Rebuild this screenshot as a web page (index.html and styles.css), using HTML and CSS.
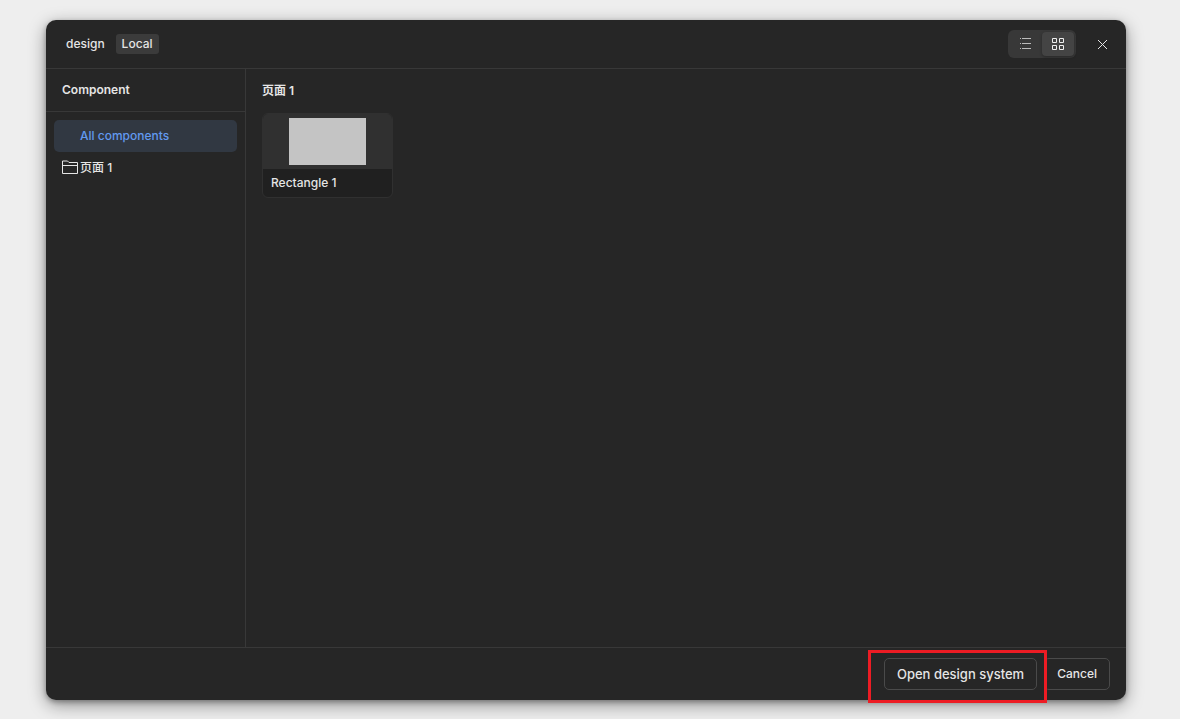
FILE: index.html
```html
<!DOCTYPE html>
<html lang="en">
<head>
    <meta charset="UTF-8">
    <meta name="viewport" content="width=device-width, initial-scale=1.0">
    <title>Design components</title>
    <link rel="stylesheet" href="styles.css">
</head>
<body>
    <main class="dialog" role="dialog" aria-label="design">
        <header class="dialog-header">
            <span class="title">design</span>
            <span class="tag">Local</span>
            <div class="view-switch">
                <button type="button" class="view-button" aria-label="List view">
                    <svg width="14" height="14" viewBox="0 0 14 14" fill="currentColor" shape-rendering="crispEdges">
                        <path d="M1 1h1v1H1zM3 1h9v1H3zM1 6h1v1H1zM3 6h9v1H3zM1 11h1v1H1zM3 11h9v1H3z"/>
                    </svg>
                </button>
                <button type="button" class="view-button active" aria-label="Grid view">
                    <svg width="14" height="14" viewBox="0 0 14 14" fill="none" stroke="currentColor">
                        <path d="M1.5 1.5h4v4h-4zM8.500 1.500h4v4h-4zM1.500 8.500h4v4h-4zM8.500 8.500h4v4h-4z"/>
                    </svg>
                </button>
            </div>
            <button type="button" class="close-button" aria-label="Close">
                <svg width="16" height="16" viewBox="0 0 16 16" fill="none" stroke="currentColor">
                    <path d="M4 4l9 9M13 4l-9 9"/>
                </svg>
            </button>
        </header>

        <div class="dialog-body">
            <aside class="sidebar">
                <h2 class="sidebar-title">Component</h2>
                <nav class="sidebar-nav">
                    <a href="#all" class="nav-item selected">
                        <span class="nav-icon"></span>
                        All components
                    </a>
                    <a href="#page-1" class="nav-item">
                        <span class="nav-icon">
                            <svg width="16" height="16" viewBox="0 0 16 16" fill="none" stroke="currentColor">
                                <path d="M.5 13.500v-12.500h5l1.500 1.500h8.500v11zM.5 5.500h15"/>
                            </svg>
                        </span>
                        页面 1
                    </a>
                </nav>
            </aside>

            <section class="content">
                <h3 class="content-title">页面 1</h3>
                <div class="card-list">
                    <article class="card">
                        <div class="card-preview">
                            <div class="shape"></div>
                        </div>
                        <div class="card-name">Rectangle 1</div>
                    </article>
                </div>
            </section>
        </div>

        <footer class="dialog-footer">
            <div class="highlight">
                <button type="button" class="button button-large">Open design system</button>
            </div>
            <button type="button" class="button">Cancel</button>
        </footer>
    </main>
</body>
</html>
```
FILE: styles.css
```css
* {
    box-sizing: border-box;
}

body {
    margin: 0;
    padding: 20px 54px 19px 46px;
    display: flex;
    height: 100vh;
    background-color: #eee;
    color: #e5e5e5;
    font-family: Inter, "Noto Sans CJK SC", sans-serif;
    font-size: 12px;
    font-weight: 500;
    line-height: 20px;
}

h2, h3 {
    margin: 0;
    font-size: 12px;
    font-weight: 600;
}

button {
    font: inherit;
    color: inherit;
    cursor: pointer;
}

svg {
    display: block;
}

.dialog {
    flex: 1;
    display: flex;
    flex-direction: column;
    background: #262626;
    border-radius: 10px;
    box-shadow: 0 5px 17px rgba(0, 0, 0, 0.4), 0 2px 5px rgba(0, 0, 0, 0.3);
}

.dialog-header {
    display: flex;
    align-items: center;
    height: 49px;
    padding: 0 16px 0 20px;
    border-bottom: 1px solid #383838;
}

.tag {
    margin-left: 11px;
    padding: 0 6px;
    border-radius: 3px;
    background: #3b3b3b;
}

.view-switch {
    display: flex;
    margin-left: auto;
    padding: 2px;
    border-radius: 6px;
    background: #383838;
}

.view-button {
    display: grid;
    place-items: center;
    width: 32px;
    height: 24px;
    padding: 0;
    border: none;
    border-radius: 4px;
    background: none;
    color: #bbb;
}

.view-button.active {
    background: #444;
    color: #eee;
    box-shadow: 0 1px 3px rgba(0, 0, 0, 0.3);
}

.close-button {
    display: grid;
    place-items: center;
    width: 16px;
    height: 24px;
    margin-left: 18px;
    padding: 0;
    border: none;
    background: none;
}

.dialog-body {
    flex: 1;
    display: flex;
    min-height: 0;
}

.sidebar {
    width: 200px;
    border-right: 1px solid #383838;
}

.sidebar-title {
    padding: 11px 16px;
    border-bottom: 1px solid #383838;
}

.sidebar-nav {
    padding: 8px;
}

.nav-item {
    display: flex;
    align-items: center;
    gap: 2px;
    height: 32px;
    padding: 0 8px;
    border-radius: 5px;
    color: inherit;
    text-decoration: none;
}

.nav-item.selected {
    background: #313842;
    color: #629af0;
}

.nav-icon {
    width: 16px;
}

.content {
    flex: 1;
    padding: 12px 16px;
}

.card-list {
    display: flex;
    flex-wrap: wrap;
    gap: 12px;
    margin-top: 12px;
}

.card {
    width: 131px;
    border: 1px solid #303030;
    border-radius: 6px;
    background: #202020;
    overflow: hidden;
}

.card-preview {
    display: grid;
    place-items: center;
    padding: 4px;
    background: #303030;
}

.shape {
    width: 77px;
    height: 47px;
    background: #c4c4c4;
}

.card-name {
    padding: 4px 8px;
}

.dialog-footer {
    display: flex;
    justify-content: flex-end;
    gap: 7px;
    padding: 10px 16px;
    border-top: 1px solid #383838;
}

.button {
    height: 32px;
    padding: 0 12px;
    border: 1px solid #4a4a4a;
    border-radius: 5px;
    background: none;
}

.button-large {
    font-size: 13px;
}

/* red frame drawn over the footer */
.highlight {
    position: relative;
}

.highlight::after {
    content: "";
    position: absolute;
    inset: -8px -10px -13px -16px;
    border: 3px solid #ed1c24;
    pointer-events: none;
}
```
